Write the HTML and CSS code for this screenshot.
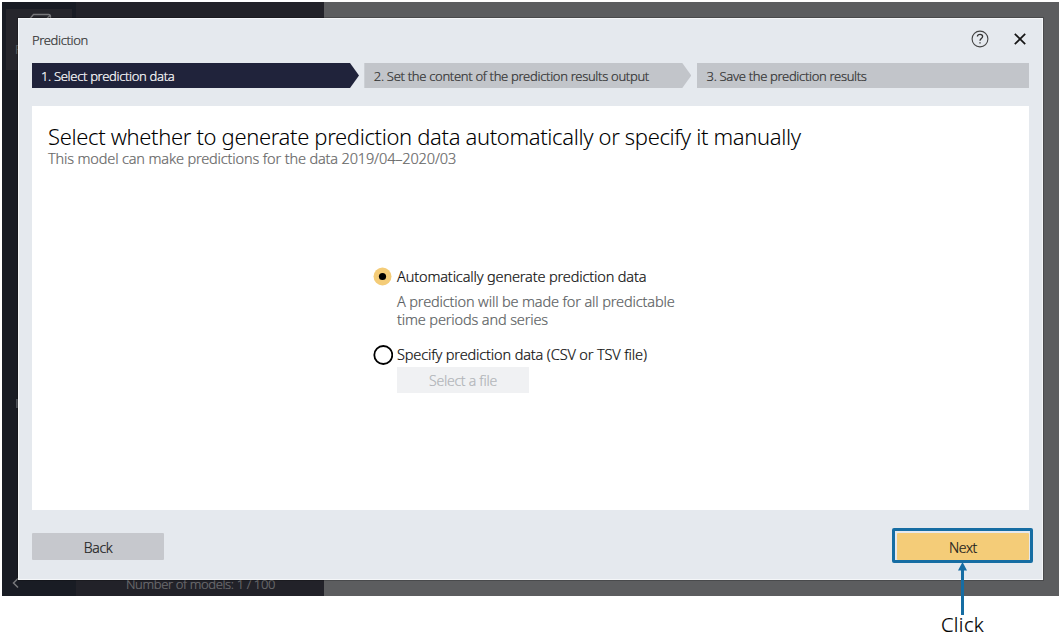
FILE: index.html
```html
<!DOCTYPE html>
<html lang="en">
<head>
<meta charset="utf-8">
<title>Prediction</title>
<link rel="stylesheet" href="styles.css">
</head>
<body>
<div class="app">
  <aside class="rail">
    <div class="rail-tile">
      <svg class="rail-icon" width="26" height="20" viewBox="0 0 26 20"><path d="M1 8 6.500 1.500H21.500Q23.500 1.500 23.500 3.500V17M1 8H17.500L23 2.500M17.500 8V19" fill="none" stroke="#77777a" stroke-width="1.300"/></svg>
      <span class="rail-label">P</span>
    </div>
    <span class="rail-mark"></span>
    <svg class="rail-back" width="8" height="12" viewBox="0 0 8 12"><path d="M6 1.500 1.500 6 6 10.500" fill="none" stroke="#77787b" stroke-width="1.500"/></svg>
  </aside>
  <section class="models"><span class="models-count">Number of models: 1 / 100</span></section>
  <main class="workspace"></main>
</div>

<div class="dialog">
  <header class="dialog-head">
    <span class="dialog-title">Prediction</span>
    <svg class="help" width="18" height="18" viewBox="0 0 18 18"><circle cx="9" cy="9" r="7.900" fill="none" stroke="#444" stroke-width="1.100"/><path d="M6.400 6.500C6.600 3.800 11.600 3.700 11.600 6.600C11.600 8.500 9 8.600 9 10.800M9 12.200V13.600" fill="none" stroke="#333" stroke-width="1.300"/></svg>
    <svg class="close" width="12" height="12" viewBox="0 0 12 12"><path d="M.800.800 11.200 11.200M11.200.800.800 11.200" fill="none" stroke="#161616" stroke-width="1.700"/></svg>
  </header>
  <nav class="steps">
    <div class="step step-arrow step-current">1. Select prediction data</div>
    <div class="step step-arrow step-next">2. Set the content of the prediction results output</div>
    <div class="step">3. Save the prediction results</div>
  </nav>
  <div class="panel">
    <h1 class="heading">Select whether to generate prediction data automatically or specify it manually</h1>
    <p class="sub">This model can make predictions for the data 2019/04–2020/03</p>
    <div class="options">
      <div class="option">
        <svg class="radio" width="20" height="20" viewBox="0 0 20 20"><circle cx="9.500" cy="9.500" r="9" fill="#f4cc78"/><circle cx="9.500" cy="9.500" r="3.600" fill="#000"/></svg>
        <span class="option-label">Automatically generate prediction data</span>
      </div>
      <p class="hint">A prediction will be made for all predictable<br>time periods and series</p>
      <div class="option option-second">
        <svg class="radio" width="20" height="20" viewBox="0 0 20 20"><circle cx="10.300" cy="10" r="9" fill="#fff" stroke="#000" stroke-width="1.800"/></svg>
        <span class="option-label">Specify prediction data (CSV or TSV file)</span>
      </div>
      <button class="file" disabled>Select a file</button>
    </div>
  </div>
  <footer class="actions">
    <button class="btn">Back</button>
    <button class="btn btn-next">Next</button>
  </footer>
</div>

<div class="callout-box"></div>
<div class="callout">
  <svg width="11" height="53" viewBox="0 0 11 53"><path d="M5.500 0 10 8.500H7V53H4V8.500H1Z" fill="#166da3"/></svg>
  <span class="callout-text">Click</span>
</div>
</body>
</html>
```
FILE: styles.css
```css
* { box-sizing: border-box; }
body {
  margin: 0;
  width: 1061px;
  height: 634px;
  padding: 2px;
  overflow: hidden;
  position: relative;
  background: #fff;
  font-family: "Noto Sans", sans-serif;
  font-weight: 300;
  -webkit-text-stroke: .2px currentColor;
  white-space: nowrap;
}
h1, p { margin: 0; }
svg { display: block; flex: none; }

.app { display: flex; width: 1057px; height: 594px; overflow: hidden; }
.rail { position: relative; width: 74px; padding: 7px 4px; background: #191c24; }
.rail-tile { height: 61px; padding: 4px 0 0 21px; background: #26262c; }
.rail-label { position: absolute; left: 13px; top: 38px; font-size: 13px; line-height: 18px; color: #68686b; }
.rail-mark { position: absolute; left: 14px; top: 397px; width: 2px; height: 9px; background: #4d5158; }
.rail-back { position: absolute; left: 10px; top: 575px; }
.models { display: flex; width: 248px; align-items: flex-end; padding: 0 0 3px 50px; background: #222229; }
.models-count { font-size: 13px; line-height: 18px; letter-spacing: -.37px; color: #6c6c6f; }
.workspace { flex: 1; background: #5c5d5f; }

.dialog {
  position: absolute;
  left: 18px;
  top: 18px;
  width: 1025px;
  height: 562px;
  padding: 0 13px;
  border: 1px solid #f4f6f8;
  outline: 1px solid rgba(0, 0, 0, .2);
  background: #e5e9ee;
}
.dialog-head { display: flex; align-items: center; height: 44px; padding: 0 3px 4px 0; }
.dialog-title { flex: 1; padding-top: 2px; font-size: 13px; letter-spacing: -.37px; color: #333; }
.close { margin-left: 25px; margin-right: .500px; }
.steps { display: grid; grid-template-columns: 327px 327px 1fr; gap: 5.300px; height: 25px; }
.step { padding: 1px 0 0 10px; background: #c2c5ca; color: #333; font-size: 13px; line-height: 25px; height: 25px; letter-spacing: -.33px; }
.step-arrow { clip-path: polygon(0 0, calc(100% - 9px) 0, 100% 50%, calc(100% - 9px) 100%, 0 100%); }
.step-current { padding-left: 9px; background: #20233b; color: #fff; }
.step-next { padding-left: 9.500px; letter-spacing: -.31px; }

.panel { height: 404px; margin-top: 18px; padding: 16px 17px 0 16px; background: #fff; }
.heading { font-size: 22px; line-height: 28px; font-weight: 300; letter-spacing: -.35px; color: #000; -webkit-text-stroke: 0; }
.sub { font-size: 14.500px; line-height: 16px; letter-spacing: -.15px; color: #686868; }
.options { padding: 100px 0 0 325px; }
.option { display: flex; align-items: center; height: 22px; }
.option-label { margin: -2px 0 0 4px; font-size: 14.500px; letter-spacing: -.14px; color: #111; }
.hint { margin: 4px 0 0 24px; font-size: 14.500px; line-height: 18px; letter-spacing: -.14px; color: #5c5f63; }
.option-second { margin-top: 16px; }
.file {
  display: block;
  width: 132px;
  height: 26px;
  margin: 1px 0 0 24px;
  padding: 0;
  border: 0;
  background: #f0f1f3;
  font: 300 14px "Noto Sans", sans-serif;
  letter-spacing: -.25px;
  color: #b2b5b9;
}
.actions { display: flex; justify-content: space-between; margin-top: 23px; }
.btn {
  width: 132px;
  height: 27px;
  padding: 1px 0 0;
  border: 0;
  border-radius: 1px;
  background: #c6c8cd;
  font: 300 14px "Noto Sans", sans-serif;
  letter-spacing: -.4px;
  color: #1c1c1c;
}
.btn-next { background: #f4cc78; }

.callout-box { position: absolute; left: 892px; top: 528px; width: 141px; height: 35px; border: 3px solid #166da3; border-radius: 2px; }
.callout { position: absolute; left: 940px; top: 562px; display: flex; flex-direction: column; align-items: center; width: 45px; }
.callout-text { margin-top: -2px; font-size: 20px; line-height: 21px; padding-top: 1px; letter-spacing: .4px; color: #000; }
```
